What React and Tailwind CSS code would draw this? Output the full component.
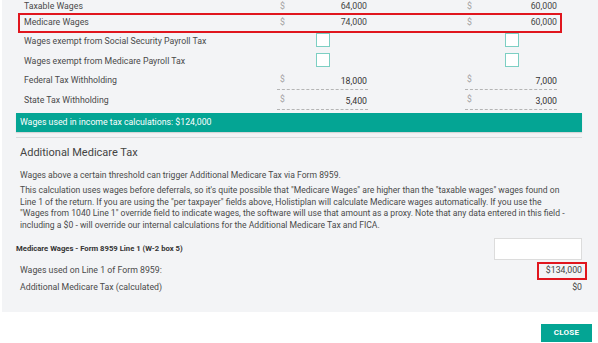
export default function App() {
  const Row = ({ label, c1, c2, highlight, kind, h = "h-[20px]" }) => (
    <div
      className={`flex ${h} w-[544px] ${
        highlight ? "border-2 border-[#e0161e]" : "border-x-2 border-transparent"
      }`}
    >
      <div
        className={`w-[257px] pl-[4px] text-[#4a4a4a] ${
          kind === "check" ? "leading-[16px]" : kind === "dash" ? "leading-[14px]" : "self-center"
        }`}
      >
        {label}
      </div>
      {kind === "check" ? (
        <>
          <div className="w-[91px]">
            <div className="ml-[39px] w-[14px] h-[14px] bg-white border border-[#7ccfc3]" />
          </div>
          <div className="w-[97px]" />
          <div className="w-[92px]">
            <div className="ml-[40px] w-[14px] h-[14px] bg-white border border-[#7ccfc3]" />
          </div>
        </>
      ) : kind === "dash" ? (
        <>
          <div className="w-[91px] h-[17px] flex justify-between border-b border-dashed border-[#b5b5b5] pl-[3px] pr-[1px]">
            <span className="text-[#a3a3a3] text-[8.5px] leading-[10px] pt-[1px]">$</span>
            <span className="text-[#333] leading-[14px] self-end pb-[1px]">{c1}</span>
          </div>
          <div className="w-[97px]" />
          <div className="w-[92px] h-[17px] flex justify-between border-b border-dashed border-[#b5b5b5] pl-[2px]">
            <span className="text-[#a3a3a3] text-[8.5px] leading-[10px] pt-[1px]">$</span>
            <span className="text-[#333] leading-[14px] self-end pb-[1px]">{c2}</span>
          </div>
        </>
      ) : (
        <>
          <div className="w-[91px] flex justify-between items-center pl-[3px] pr-[1px]">
            <span className="text-[#a3a3a3]">$</span>
            <span className="text-[#444]">{c1}</span>
          </div>
          <div className="w-[97px]" />
          <div className="w-[92px] flex justify-between items-center pl-[2px]">
            <span className="text-[#a3a3a3]">$</span>
            <span className="text-[#444]">{c2}</span>
          </div>
        </>
      )}
    </div>
  );

  return (
    <div className="w-[598px] h-[343px] bg-white overflow-hidden font-['Roboto',sans-serif] text-[8.75px]">
      <div className="ml-[2px] w-[596px] h-[312px] bg-[#f3f4f6] flex flex-col">
        <div className="pl-[16px] flex flex-col">
          <Row label="Taxable Wages" c1="64,000" c2="60,000" h="h-[13px]" />
          <Row label="Medicare Wages" c1="74,000" c2="60,000" highlight />
          <Row label="Wages exempt from Social Security Payroll Tax" kind="check" />
          <Row label="Wages exempt from Medicare Payroll Tax" kind="check" />
          <Row label="Federal Tax Withholding" c1="18,000" c2="7,000" kind="dash" />
          <Row label="State Tax Withholding" c1="5,400" c2="3,000" kind="dash" />
        </div>
        <div className="ml-[14px] w-[566px] h-[19px] bg-[#04a594] text-white flex items-center pl-[4px] shadow-[0_1px_1px_rgba(0,0,0,0.12)]">
          Wages used in income tax calculations: $124,000
        </div>
        <div className="ml-[14px] w-[566px] h-px bg-[#d9dadc] mt-[5px]" />
        <div className="pl-[18px] mt-[8px] text-[11px] leading-[14px] text-[#444]">
          Additional Medicare Tax
        </div>
        <div className="pl-[18px] mt-[9px] text-[8.6px] leading-[12px] text-[#4a4a4a] whitespace-nowrap">
          Wages above a certain threshold can trigger Additional Medicare Tax via Form 8959.
        </div>
        <div className="pl-[18px] mt-[4px] text-[8.6px] leading-[11.5px] text-[#4a4a4a] whitespace-nowrap">
          This calculation uses wages before deferrals, so it's quite possible that "Medicare Wages" are higher than the "taxable wages" wages found on
          <br />
          Line 1 of the return. If you are using the "per taxpayer" fields above, Holistiplan will calculate Medicare wages automatically. If you use the
          <br />
          "Wages from 1040 Line 1" override field to indicate wages, the software will use that amount as a proxy. Note that any data entered in this field -
          <br />
          including a $0 - will override our internal calculations for the Additional Medicare Tax and FICA.
        </div>
        <div className="mt-[7px] h-[22px] flex items-center justify-between pl-[14px] pr-[16px]">
          <span className="font-bold text-[7.7px] text-[#333]">
            Medicare Wages - Form 8959 Line 1 (W-2 box 5)
          </span>
          <div className="w-[88px] h-[22px] bg-white border border-[#dcdcdc]" />
        </div>
        <div className="mt-[2px] h-[18px] flex items-center justify-between pl-[18px] pr-[11px] text-[#4a4a4a]">
          <span>Wages used on Line 1 of Form 8959:</span>
          <span className="h-[18px] w-[50px] border-2 border-[#e0161e] flex items-center justify-end pr-[3px] text-[#444]">
            $134,000
          </span>
        </div>
        <div className="h-[16px] flex items-center justify-between pl-[18px] pr-[16px] text-[#4a4a4a]">
          <span>Additional Medicare Tax (calculated)</span>
          <span className="text-[#444]">$0</span>
        </div>
      </div>
      <div className="flex justify-end pr-[6px] pt-[12px]">
        <button className="w-[51px] h-[18px] bg-[#04a594] text-white font-bold text-[8px] tracking-[0.2px] flex items-center justify-center">
          CLOSE
        </button>
      </div>
    </div>
  );
}
